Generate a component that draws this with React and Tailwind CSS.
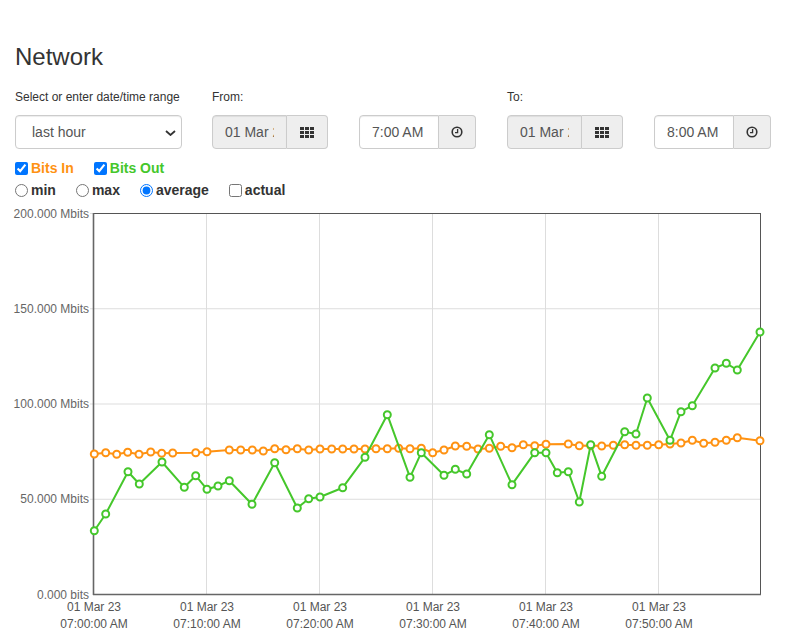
import React from "react";

const orange = [
  [94.3,454],[105.7,452.7],[116.7,454.3],[127.7,452.3],[139,454.3],[150.7,452],[161.7,453.3],[172.7,453],
  [195.7,452.7],[207,451.7],[229.3,450],[240.7,450],[252.3,450],[263.3,451],[274.7,448.7],[286,449.7],
  [297.3,448.7],[308.7,450],[320,449],[331.7,449],[342.7,449],[354,449],[365,449],[376,448.7],[387.3,448.7],
  [398.7,448.3],[410,448.7],[421.3,448.3],[432.7,452.7],[444,450],[455.3,446],[466.7,446.3],[478,449],
  [489.3,448.3],[500.7,446.3],[512,447.7],[523.3,444.7],[534.7,445.7],[546,444.3],[568.3,444],[579.3,445.7],
  [590.7,445.5],[601.7,446],[613.3,445.3],[624.7,444.7],[636,445.3],[647.3,445.3],[658.7,444.7],[670,444],
  [681,443],[692.3,440.3],[703.7,443.3],[715,442.3],[726.3,440.3],[737.3,437.7],[760,440.7],
];

const green = [
  [94.3,530.7],[105.7,514],[128,471.7],[139.3,484],[162,462],[184.3,487.3],[195.7,475.7],[207,489.3],
  [218,486],[229.3,480.7],[252,504.3],[274.7,462.7],[297.3,508],[308.7,498.7],[320,497],[342.7,487.7],
  [365,457.3],[387.3,414.7],[410,477.3],[421.3,452.7],[444,475.3],[455.3,469.3],[466.7,474],[489.3,434.7],
  [512,484.7],[534.7,452.7],[546,452.7],[557.3,472.7],[568.3,471.7],[579.3,502],[590.7,444.7],[601.7,476.3],
  [624.7,431.7],[636,434],[647.3,398],[670,440.3],[681,411.7],[692.3,405.7],[715,368],[726.3,363.3],
  [737.3,370],[760,332],
];

const ORANGE = "#ff9212";
const GREEN = "#45c72b";

function GridIcon() {
  const sq = [];
  for (let r = 0; r < 3; r++)
    for (let c = 0; c < 3; c++)
      sq.push(<rect key={r + "-" + c} x={c * 5} y={r * 4} width="4" height="3" fill="#333" />);
  return (
    <svg width="14" height="11" viewBox="0 0 14 11">
      {sq}
    </svg>
  );
}

function ClockIcon() {
  return (
    <svg width="12" height="12" viewBox="0 0 12 12">
      <circle cx="6" cy="6" r="4.8" fill="none" stroke="#333" strokeWidth="1.6" />
      <path d="M6.6 3 V6.6 H4" fill="none" stroke="#333" strokeWidth="1.3" />
    </svg>
  );
}

function DateGroup() {
  return (
    <div className="flex h-[34px] w-[116px]">
      <input
        readOnly
        value="01 Mar 2023"
        className="w-[75px] h-[34px] border border-[#ccc] rounded-l-[4px] bg-[#eee] px-[12px] text-[14px] text-[#555] shadow-[inset_0_1px_1px_rgba(0,0,0,0.075)] outline-none"
      />
      <div className="w-[41px] h-[34px] border border-l-0 border-[#ccc] rounded-r-[4px] bg-[#eee] flex items-center justify-center">
        <GridIcon />
      </div>
    </div>
  );
}

function TimeGroup({ value }) {
  return (
    <div className="flex h-[34px] w-[117px]">
      <input
        readOnly
        value={value}
        className="w-[80px] h-[34px] border border-[#ccc] rounded-l-[4px] bg-white px-[12px] text-[14px] text-[#555] shadow-[inset_0_1px_1px_rgba(0,0,0,0.075)] outline-none"
      />
      <div className="w-[37px] h-[34px] border border-l-0 border-[#ccc] rounded-r-[4px] bg-[#eee] flex items-center justify-center">
        <ClockIcon />
      </div>
    </div>
  );
}

function Chart() {
  const xs = [93, 206, 319, 432, 545, 658];
  const times = ["07:00:00 AM", "07:10:00 AM", "07:20:00 AM", "07:30:00 AM", "07:40:00 AM", "07:50:00 AM"];
  const ys = [
    [213.5, "200.000 Mbits"],
    [308.75, "150.000 Mbits"],
    [404, "100.000 Mbits"],
    [499.25, "50.000 Mbits"],
    [594.5, "0.000 bits"],
  ];
  const toPath = (pts) => pts.map((p, i) => (i ? "L" : "M") + p[0] + " " + p[1]).join(" ");
  return (
    <svg width="787" height="431" viewBox="0 203 787 431" className="block" style={{ fontFamily: '"Liberation Sans", Arial, sans-serif' }}>
      {xs.slice(1).map((x) => (
        <line key={x} x1={x + 0.5} x2={x + 0.5} y1="213.5" y2="594.5" stroke="#ddd" strokeWidth="1" />
      ))}
      {ys.slice(1, 4).map(([y]) => (
        <line key={y} x1="90" x2="760.5" y1={y} y2={y} stroke="#ddd" strokeWidth="1" />
      ))}
      <line x1="90" x2="93.5" y1="213.5" y2="213.5" stroke="#ddd" />
      <rect x="93.5" y="213.5" width="667" height="381" fill="none" stroke="#555" strokeWidth="1" />
      <line x1="93.5" x2="93.5" y1="213" y2="595" stroke="#666" strokeWidth="1.6" />
      <line x1="93" x2="761" y1="594.5" y2="594.5" stroke="#666" strokeWidth="1.6" />
      {ys.map(([y, t]) => (
        <text key={t} x="89" y={y} textAnchor="end" dominantBaseline="central" fontSize="12" fill="#666">
          {t}
        </text>
      ))}
      {xs.map((x, i) => (
        <g key={x}>
          <text x={x + 1} y="607" textAnchor="middle" dominantBaseline="central" fontSize="12" fill="#555">
            01 Mar 23
          </text>
          <text x={x + 1} y="624" textAnchor="middle" dominantBaseline="central" fontSize="12" fill="#555">
            {times[i]}
          </text>
        </g>
      ))}
      <path d={toPath(orange)} fill="none" stroke={ORANGE} strokeWidth="2" strokeLinejoin="round" />
      {orange.map(([x, y], i) => (
        <circle key={"o" + i} cx={x} cy={y} r="3.5" fill="#fff" stroke={ORANGE} strokeWidth="2" />
      ))}
      <path d={toPath(green)} fill="none" stroke={GREEN} strokeWidth="2" strokeLinejoin="round" />
      {green.map(([x, y], i) => (
        <circle key={"g" + i} cx={x} cy={y} r="3.5" fill="#fff" stroke={GREEN} strokeWidth="2" />
      ))}
    </svg>
  );
}

export default function App() {
  return (
    <div className="w-[787px] h-[634px] bg-white overflow-hidden text-[#333]" style={{ fontFamily: '"Liberation Sans", Arial, sans-serif' }}>
      <div className="px-[15px] pt-[44px]">
        <h2 className="text-[24px] leading-[1.1] font-normal m-0">Network</h2>
        <div className="flex mt-[19px]">
          <div className="w-[197px]">
            <div className="text-[12px] leading-[16px]">Select or enter date/time range</div>
            <div className="relative mt-[10px] w-[167px] h-[34px]">
              <select
                defaultValue="last hour"
                className="appearance-none w-full h-[34px] border border-[#ccc] rounded-[4px] bg-white pl-[16px] text-[14px] text-[#555] shadow-[inset_0_1px_1px_rgba(0,0,0,0.075)] outline-none"
              >
                <option>last hour</option>
              </select>
              <svg className="absolute left-[150px] top-[15px] pointer-events-none" width="11" height="6" viewBox="0 0 11 6">
                <path d="M1 1 L5.5 5 L10 1" fill="none" stroke="#333" strokeWidth="1.8" />
              </svg>
            </div>
          </div>
          <div className="w-[295px]">
            <div className="text-[12px] leading-[16px]">From:</div>
            <div className="flex gap-[31px] mt-[10px]">
              <DateGroup />
              <TimeGroup value="7:00 AM" />
            </div>
          </div>
          <div>
            <div className="text-[12px] leading-[16px]">To:</div>
            <div className="flex gap-[31px] mt-[10px]">
              <DateGroup />
              <TimeGroup value="8:00 AM" />
            </div>
          </div>
        </div>
        <div className="flex gap-[20px] mt-[9px] h-[20px] items-center text-[14px] font-bold">
          <label className="flex items-center gap-[3px]">
            <input type="checkbox" defaultChecked className="m-0 w-[13px] h-[13px]" />
            <span className="text-[#ff9212]">Bits In</span>
          </label>
          <label className="flex items-center gap-[3px]">
            <input type="checkbox" defaultChecked className="m-0 w-[13px] h-[13px]" />
            <span className="text-[#45c72b]">Bits Out</span>
          </label>
        </div>
        <div className="flex gap-[20px] mt-[2px] h-[20px] items-center text-[14px] font-bold">
          <label className="flex items-center gap-[3px]">
            <input type="radio" name="agg" className="m-0 w-[13px] h-[13px]" />
            <span>min</span>
          </label>
          <label className="flex items-center gap-[3px]">
            <input type="radio" name="agg" className="m-0 w-[13px] h-[13px]" />
            <span>max</span>
          </label>
          <label className="flex items-center gap-[3px]">
            <input type="radio" name="agg" defaultChecked className="m-0 w-[13px] h-[13px]" />
            <span>average</span>
          </label>
          <label className="flex items-center gap-[3px]">
            <input type="checkbox" className="m-0 w-[13px] h-[13px]" />
            <span>actual</span>
          </label>
        </div>
      </div>
      <div className="mt-[3px]">
        <Chart />
      </div>
    </div>
  );
}
